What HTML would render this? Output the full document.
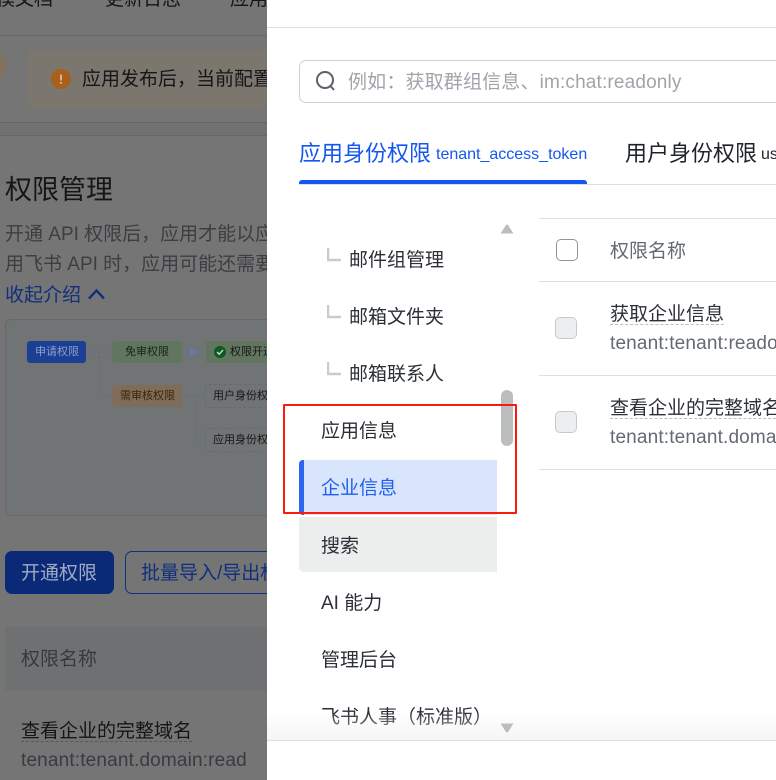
<!DOCTYPE html>
<html lang="zh"><head><meta charset="utf-8"><title>权限管理</title>
<style>
html,body{margin:0;padding:0;background:#fff}
body{width:776px;height:780px;position:relative;overflow:hidden;font-family:"Liberation Sans","Noto Sans CJK SC",sans-serif;color:#1f2329}
.t{position:absolute;white-space:nowrap;line-height:26px;font-size:19px}
.b{position:absolute}
#left{position:absolute;left:0;top:0;width:267px;height:780px;background:#757575;overflow:hidden}
#left .t{color:#151617}
#right{position:absolute;left:267px;top:0;width:509px;height:780px;background:#fff;overflow:hidden}
#left .t.s,.s{font-size:11px;line-height:20px}
.n{color:#2b2f36}
.sub{color:#646a73}
.lat{letter-spacing:.16px}
.dash{border-bottom:1px dashed #bbbfc4;height:22px;line-height:25px}
.cb{position:absolute;width:20px;height:20px;border:1px solid #c6c9ce;background:#eceef0;border-radius:5px}
</style></head><body>
<div id="left">
<div class="t" style="left:-4px;top:-13px">模文档</div>
<div class="t" style="left:105px;top:-13px">更新日志</div>
<div class="t" style="left:230px;top:-13px">应用</div>
<div class="b" style="left:0;top:35px;width:267px;height:1px;background:#666"></div>
<div class="b" style="left:-8px;top:55px;width:14px;height:22px;background:#80725f;border-radius:4px"></div>
<div class="b" style="left:28px;top:50px;width:260px;height:58px;background:#7b766e;border-radius:6px"></div>
<svg class="b" style="left:51px;top:69px" width="20" height="20"><circle cx="10" cy="10" r="10" fill="#a9601a"/><rect x="9.2" y="5.5" width="1.6" height="6" fill="#d9c9b6"/><rect x="9.2" y="13" width="1.6" height="1.8" fill="#d9c9b6"/></svg>
<div class="t" style="left:82px;top:67px">应用发布后，当前配置</div>
<div class="b" style="left:0;top:122px;width:267px;height:14px;background:#707171;border-top:1px solid #666;border-bottom:1px solid #666;box-sizing:border-box"></div>
<div class="t" style="left:5px;top:172px;font-size:27px;line-height:36px">权限管理</div>
<div class="t" style="left:5px;top:222px;color:#3c3e42">开通 API 权限后，应用才能以应</div>
<div class="t" style="left:5px;top:252px;color:#3c3e42">用飞书 API 时，应用可能还需要</div>
<div class="t" style="left:5px;top:283px;color:#102f7c">收起介绍</div>
<svg class="b" style="left:88px;top:288px" width="18" height="13"><path d="M1 10.5 L8.5 2.5 L16 10.5" fill="none" stroke="#102f7c" stroke-width="2.4"/></svg>
<div class="b" style="left:5px;top:319px;width:270px;height:197px;box-sizing:border-box;border:1px solid #66696b;border-radius:6px;background:#707475"></div>
<div class="b" style="left:27px;top:341px;width:59px;height:22px;background:#1b3f92;border-radius:3px"></div>
<div class="t s" style="left:35px;top:342px;color:#8f9fc8">申请权限</div>
<div class="b" style="left:112px;top:341px;width:70px;height:22px;background:#62755f;border-radius:3px"></div>
<div class="t s" style="left:125px;top:342px;color:#12280f">免审权限</div>
<div class="b" style="left:206px;top:341px;width:70px;height:22px;background:#62755f;border-radius:3px"></div>
<svg class="b" style="left:214px;top:346px" width="12" height="12"><circle cx="6" cy="6" r="6" fill="#0d5a22"/><path d="M3 6 L5.2 8.2 L9 4" fill="none" stroke="#c9d6c7" stroke-width="1.5"/></svg>
<div class="t s" style="left:230px;top:342px;color:#151617">权限开通</div>
<svg class="b" style="left:86px;top:340px" width="125" height="115" fill="none" stroke="#626a82" stroke-dasharray="2 2">
<path d="M0 12H26M13 12V56H26"/><path d="M96 12H104"/><path d="M96 56H118M109 56V95Q109 100 114 100H118"/>
<path d="M104 7L112 12L104 17Z" fill="#6a7aa8" stroke="none"/></svg>
<div class="b" style="left:112px;top:385px;width:70px;height:22px;background:#7f6c5a;border-radius:3px"></div>
<div class="t s" style="left:120px;top:386px;color:#3b2606">需审核权限</div>
<div class="b" style="left:205px;top:384px;width:72px;height:24px;box-sizing:border-box;border:1px dashed #626a82;border-radius:4px"></div>
<div class="t s" style="left:213px;top:386px;color:#151617">用户身份权</div>
<div class="b" style="left:205px;top:428px;width:72px;height:24px;box-sizing:border-box;border:1px dashed #626a82;border-radius:4px"></div>
<div class="t s" style="left:213px;top:430px;color:#151617">应用身份权</div>
<div class="b" style="left:5px;top:551px;width:109px;height:43px;background:#0a2a77;border-radius:7px"></div>
<div class="t" style="left:21px;top:561px;color:#a0aac4">开通权限</div>
<div class="b" style="left:125px;top:551px;width:160px;height:43px;box-sizing:border-box;border:1px solid #102f7c;border-radius:7px"></div>
<div class="t" style="left:141px;top:561px;color:#102f7c">批量导入/导出权限</div>
<div class="b" style="left:5px;top:627px;width:262px;height:63px;background:#6e7071"></div>
<div class="t" style="left:21px;top:647px;color:#38393c">权限名称</div>
<div class="t dash" style="left:21px;top:719px;border-color:#55585c">查看企业的完整域名</div>
<div class="t lat" style="left:21px;top:748px;color:#383b41">tenant:tenant.domain:read</div>
</div>
<div id="right">
<div class="b" style="left:0;top:27px;width:509px;height:1px;background:#dee0e3"></div>
<div class="b" style="left:32px;top:60px;width:500px;height:43px;box-sizing:border-box;border:1px solid #d0d3d6;border-radius:7px"></div>
<svg class="b" style="left:47px;top:69px" width="22" height="24" fill="none" stroke="#5b6168" stroke-width="2"><circle cx="11" cy="11" r="8"/><path d="M16.5 17 L20 21"/></svg>
<div class="t lat" style="left:81px;top:70px;color:#a0a4aa">例如：获取群组信息、im:chat:readonly</div>
<div class="t" style="left:32px;top:138px;font-size:22px;line-height:32px;color:#1456f0">应用身份权限</div>
<div class="t" style="left:169px;top:142px;font-size:16px;color:#1456f0">tenant_access_token</div>
<div class="t" style="left:358px;top:138px;font-size:22px;line-height:32px;color:#1f2329">用户身份权限</div>
<div class="t" style="left:494px;top:142px;font-size:16px">user_access_token</div>
<div class="b" style="left:32px;top:184px;width:477px;height:1px;background:#dee0e3"></div>
<div class="b" style="left:32px;top:180px;width:288px;height:4px;background:#1456f0;border-radius:3px 3px 0 0"></div>

<svg class="b" style="left:233px;top:224px" width="14" height="10"><path d="M0.5 9.5 L6 1 Q7 0 8 1 L13.5 9.5Z" fill="#bcbdbf"/></svg>
<div class="b" style="left:234px;top:390px;width:12px;height:56px;border-radius:6px;background:#bcbdbf"></div>
<svg class="b" style="left:60px;top:248px" width="14" height="14"><path d="M1 0V12H14" fill="none" stroke="#c8cbcf" stroke-width="2.5"/></svg>
<svg class="b" style="left:60px;top:305px" width="14" height="14"><path d="M1 0V12H14" fill="none" stroke="#c8cbcf" stroke-width="2.5"/></svg>
<svg class="b" style="left:60px;top:362px" width="14" height="14"><path d="M1 0V12H14" fill="none" stroke="#c8cbcf" stroke-width="2.5"/></svg>
<div class="t n" style="left:82px;top:248px">邮件组管理</div>
<div class="t n" style="left:82px;top:305px">邮箱文件夹</div>
<div class="t n" style="left:82px;top:362px">邮箱联系人</div>
<div class="t n" style="left:54px;top:419px">应用信息</div>
<div class="b" style="left:32px;top:460px;width:198px;height:55px;background:#d9e5fc;border-radius:4px 0 0 4px"></div>
<div class="b" style="left:32px;top:460px;width:5px;height:55px;background:#2e65ef;border-radius:4px 0 0 4px"></div>
<div class="t" style="left:54px;top:476px;color:#1f60f0">企业信息</div>
<div class="b" style="left:32px;top:517px;width:198px;height:55px;background:#eceeee;border-radius:0 0 0 5px"></div>
<div class="t n" style="left:54px;top:534px">搜索</div>
<div class="t n" style="left:54px;top:591px">AI 能力</div>
<div class="t n" style="left:54px;top:648px">管理后台</div>
<div class="t n" style="left:54px;top:705px">飞书人事（标准版）</div>
<div class="b" style="left:0;top:712px;width:509px;height:28px;background:linear-gradient(rgba(240,241,242,0),rgba(240,241,242,.7))"></div>
<svg class="b" style="left:233px;top:723px" width="14" height="10"><path d="M0.5 0.5 L6 9 Q7 10 8 9 L13.5 0.5Z" fill="#bcbdbf"/></svg>
<div class="b" style="left:0;top:740px;width:509px;height:1px;background:#dee0e3"></div>

<div class="b" style="left:272px;top:218px;width:237px;height:1px;background:#dee0e3"></div>
<div class="b" style="left:272px;top:281px;width:237px;height:1px;background:#dee0e3"></div>
<div class="b" style="left:272px;top:375px;width:237px;height:1px;background:#dee0e3"></div>
<div class="b" style="left:272px;top:469px;width:237px;height:1px;background:#dee0e3"></div>
<div class="cb" style="left:289px;top:239px;background:#fff;border-color:#8f959e"></div>
<div class="cb" style="left:288px;top:317px"></div>
<div class="cb" style="left:288px;top:411px"></div>
<div class="t" style="left:343px;top:239px;color:#646a73">权限名称</div>
<div class="t n dash" style="left:343px;top:302px">获取企业信息</div>
<div class="t sub lat" style="left:343px;top:331px">tenant:tenant:readonly</div>
<div class="t n dash" style="left:343px;top:396px">查看企业的完整域名</div>
<div class="t sub lat" style="left:343px;top:425px">tenant:tenant.domain:read</div>
</div>
<div class="b" style="left:283px;top:404px;width:234px;height:110px;border:2px solid #fb1a10;border-radius:1px;box-sizing:border-box"></div>
</body></html>
